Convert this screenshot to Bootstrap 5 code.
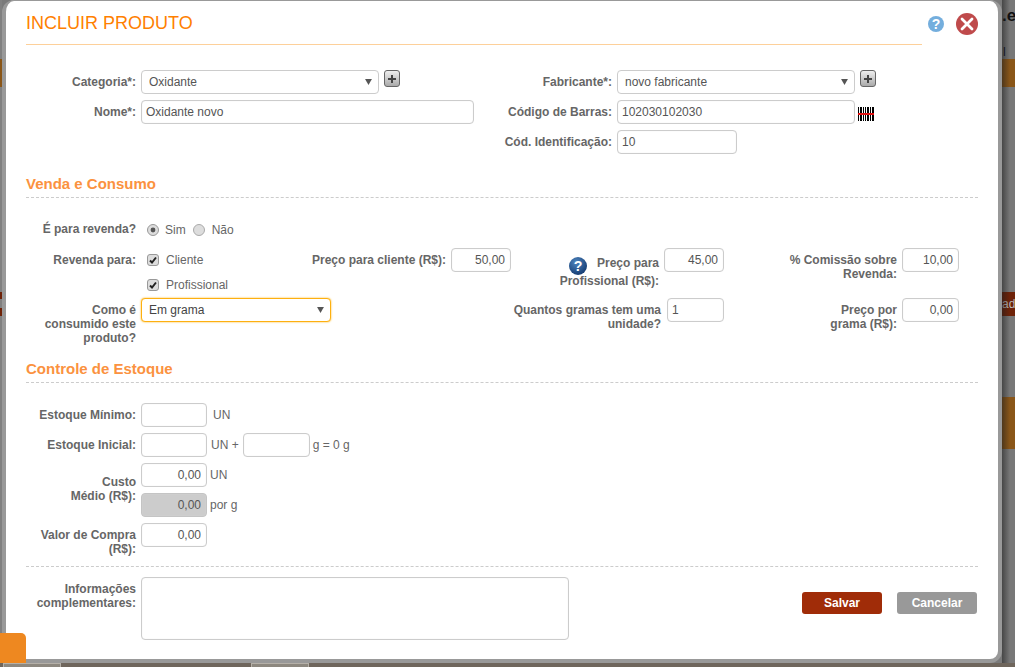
<!DOCTYPE html>
<html lang="pt-BR">
<head>
    <meta charset="UTF-8">
    <meta name="viewport" content="width=device-width, initial-scale=1.0">
    <title>Incluir Produto</title>
    <link rel="stylesheet" href="https://cdn.jsdelivr.net/npm/bootstrap@5.3.0/dist/css/bootstrap.min.css">
    <style>
        html, body { height: 667px; overflow: hidden; }
        body { background: #7a7a7a; font: 12px/14px "Liberation Sans", Arial, sans-serif; color: #666; position: relative; }

        /* page behind the dialog */
        .fundo-dir { position: absolute; left: 1002px; top: 0; width: 13px; height: 663px; background: #787878; overflow: hidden; color: #111; }
        .fundo-dir::after { content: ""; position: absolute; inset: 0; background: linear-gradient(90deg, rgba(30,30,30,.55), rgba(30,30,30,0) 8px); }
        .fundo-esq { position: absolute; left: 0; top: 0; width: 2px; height: 663px; background: #808080; }
        .faixa { position: absolute; left: 0; right: 0; }
        .faixa-marrom { background: #8a5618; }
        .faixa-vermelha { background: #6e2208; color: #bbb; font-size: 12px; line-height: 24px; }
        .texto-e { position: absolute; left: 0; top: 6px; font: bold 17px/20px "Liberation Sans", sans-serif; }
        .texto-d { position: absolute; left: 1px; top: 45px; font-size: 12px; color: #112; }
        .rodape { position: absolute; left: 0; right: 0; top: 663px; height: 4px; background: #6f665c; }
        .rodape-aba { position: absolute; top: 0; height: 4px; background: #8d887f; border: 1px solid #b5b0a8; border-bottom: 0; }

        .janela { position: absolute; left: 2px; top: 0; width: 1000px; height: 663px; background: #fff; border: 4px solid #999; border-top-width: 1px; border-radius: 12px; padding: 0 20px; }
        .aba-laranja { position: absolute; left: 0; top: 633px; width: 26px; height: 30px; background: #ee8820; border-top-right-radius: 5px; }

        .topo { height: 44px; }
        .titulo { width: 896px; height: 44px; margin: 0; font: 18px/44px "Liberation Sans", sans-serif; color: #ff8000; border-bottom: 1px solid #fdd09a; }
        .ico-ajuda { margin: 15px 0 0 6px; }
        .ico-fechar { margin: 12px 0 0 12px; }

        .secao { font: bold 15px/18px "Liberation Sans", sans-serif; color: #fb9240; padding-bottom: 4px; margin: 0; border-bottom: 1px dashed #ccc; }
        .rotulo { color: #666; font-weight: bold; text-align: right; padding-top: 5px; margin: 0; }
        .rotulo-esq { width: 110px; flex: none; margin-right: 5px; }
        .linha { display: flex; align-items: flex-start; margin-bottom: 6px; }

        .campo { height: 24px; padding: 0 4px; font-size: 12px; line-height: 22px; color: #555; border: 1px solid #ccc; border-radius: 4px; box-shadow: inset 0 0 1px #ddd; min-height: 0; }
        .campo.num { text-align: right; padding-right: 5px; }
        .campo:disabled { background: #ccc; border-color: #c4c4c4; color: #555; }
        .selecao { height: 24px; padding: 0 7px; font-size: 12px; line-height: 22px; color: #555; border: 1px solid #ccc; border-radius: 4px; background-image: url("data:image/svg+xml,%3csvg xmlns='http://www.w3.org/2000/svg' viewBox='0 0 8 7'%3e%3cpath fill='%23555' d='M0 0h8L4 7z'/%3e%3c/svg%3e"); background-size: 7px 6px; background-position: right 6px center; min-height: 0; }
        .selecao.ativo { border-color: #fdb010; box-shadow: 0 0 2px #fdb010; color: #444; }
        .l238 { width: 238px; } .l333 { width: 333px; } .l120 { width: 120px; }
        .l190 { width: 190px; } .l66 { width: 66px; } .l67 { width: 67px; } .l60 { width: 60px; } .l57 { width: 57px; } .l428 { width: 428px; }

        .btn-mais { width: 16px; height: 17px; margin-left: 5px; padding: 0; border: 1px solid #666; border-radius: 3px; background: linear-gradient(#eee, #aaa); display: flex; align-items: center; justify-content: center; }
        .barras { margin: 7px 0 0 3px; }
        .txt-un { padding-top: 5px; }

        .grade-venda { display: grid; grid-template-columns: 274px 211px 213px 235px; }
        .celula { display: flex; justify-content: flex-end; align-items: flex-start; gap: 5px; }
        .opcao { display: flex; align-items: center; height: 24px; margin: 0; }
        .opcao .form-check-input { width: 12px; height: 12px; margin: 0 7px 0 0; flex: none; background-color: #ddd; border: 1px solid #aaa; box-shadow: none; }
        .opcao .form-check-input:checked { border-color: #999; background-color: #ddd; background-size: 10px; }
        .opcao input[type=checkbox]:checked { background-image: url("data:image/svg+xml,%3csvg xmlns='http://www.w3.org/2000/svg' viewBox='0 0 10 10'%3e%3cpath fill='none' stroke='%23222' stroke-width='2' d='M2 5.5l2 2 4-5'/%3e%3c/svg%3e"); }
        .opcao input[type=radio]:checked { background-image: url("data:image/svg+xml,%3csvg xmlns='http://www.w3.org/2000/svg' viewBox='0 0 10 10'%3e%3ccircle cx='5' cy='5' r='2.4' fill='%23555'/%3e%3c/svg%3e"); }
        .linha-radio { margin: 19px 0 7px; }
        .linha-radio .opcao { padding-top: 2px; }
        .linha-radio .form-check-input { margin-right: 6px; }
        .rad-sim { margin-left: 6px; }
        .rad-nao { margin-left: 7px; }
        .rad-nao .form-check-input { margin-right: 7px; }
        .ico-duvida { vertical-align: middle; margin: 4px 10px 0 0; }
        .rotulo-duvida .linha-ico { display: block; line-height: 19px; height: 21px; }

        .btn-salvar, .btn-cancelar { width: 80px; height: 22px; padding: 0; font-size: 12px; font-weight: bold; line-height: 20px; color: #fff; border: 0; border-radius: 3px; }
        .btn-salvar { background: #a02c08; }
        .btn-cancelar { background: #999; margin-left: 15px; }
        .btn-salvar:hover { background: #a02c08; color: #fff; }
        .btn-cancelar:hover { background: #999; color: #fff; }
    </style>
</head>
<body>

<div class="fundo-esq">
    <div class="faixa faixa-marrom" style="top:59px;height:28px"></div>
    <div class="faixa faixa-vermelha" style="top:292px;height:7px"></div>
    <div class="faixa faixa-vermelha" style="top:308px;height:8px"></div>
</div>
<div class="fundo-dir">
    <span class="texto-e">.e</span>
    <span class="texto-d">l d</span>
    <div class="faixa faixa-marrom" style="top:59px;height:28px"></div>
    <div class="faixa faixa-vermelha" style="top:292px;height:24px">ad</div>
    <div class="faixa faixa-marrom" style="top:397px;height:52px"></div>
</div>
<div class="rodape">
    <div class="rodape-aba" style="left:3px;width:58px"></div>
    <div class="rodape-aba" style="left:251px;width:58px"></div>
</div>

<div class="janela">
    <div class="topo d-flex align-items-start">
        <h1 class="titulo">INCLUIR PRODUTO</h1>
        <svg class="ico-ajuda" width="16" height="16" viewBox="0 0 16 16">
            <circle cx="8" cy="8" r="8" fill="#74aedd"/>
            <text x="8" y="13" text-anchor="middle" font-family="Liberation Sans" font-weight="bold" font-size="14" fill="#fff">?</text>
        </svg>
        <svg class="ico-fechar" width="22" height="22" viewBox="0 0 22 22">
            <circle cx="11" cy="11" r="11" fill="#bf4a4b"/>
            <path d="M6 6l10 10M16 6L6 16" stroke="#fff" stroke-width="2.8" stroke-linecap="round"/>
        </svg>
    </div>

    <form>
        <div class="row g-0 topo-form">
            <div class="col-auto" style="width:476px;margin-top:25px">
                <div class="linha">
                    <label class="rotulo rotulo-esq">Categoria*:</label>
                    <select class="form-select selecao l238"><option>Oxidante</option></select>
                    <span class="btn-mais"><svg width="10" height="10" viewBox="0 0 10 10"><path d="M4 1h2v3h3v2H6v3H4V6H1V4h3z" fill="#444"/></svg></span>
                </div>
                <div class="linha">
                    <label class="rotulo rotulo-esq">Nome*:</label>
                    <input class="form-control campo l333" value="Oxidante novo">
                </div>
            </div>
            <div class="col-auto" style="width:400px;margin-top:25px">
                <div class="linha">
                    <label class="rotulo rotulo-esq">Fabricante*:</label>
                    <select class="form-select selecao l238"><option>novo fabricante</option></select>
                    <span class="btn-mais"><svg width="10" height="10" viewBox="0 0 10 10"><path d="M4 1h2v3h3v2H6v3H4V6H1V4h3z" fill="#444"/></svg></span>
                </div>
                <div class="linha">
                    <label class="rotulo rotulo-esq">Código de Barras:</label>
                    <input class="form-control campo l238" value="102030102030">
                    <svg class="barras" width="16" height="14" viewBox="0 0 16 14">
                        <path d="M0 0h1v14H0zM2 0h2v14H2zM5 0h1v14H5zM7 0h1v14H7zM9 0h2v14H9zM12 0h1v14h-1zM14 0h2v14h-2z" fill="#000"/>
                        <rect y="6" width="16" height="2" fill="#e01010"/>
                    </svg>
                </div>
                <div class="linha mb-0">
                    <label class="rotulo rotulo-esq">Cód. Identificação:</label>
                    <input class="form-control campo l120" value="10">
                </div>
            </div>
        </div>

        <h2 class="secao" style="margin-top:21px">Venda e Consumo</h2>

        <div class="linha linha-radio">
            <label class="rotulo rotulo-esq">É para revenda?</label>
            <label class="opcao rad-sim"><input class="form-check-input" type="radio" name="revenda" checked>Sim</label>
            <label class="opcao rad-nao"><input class="form-check-input" type="radio" name="revenda">Não</label>
        </div>

        <div class="grade-venda">
            <div class="d-flex align-items-start" style="height:50px">
                <label class="rotulo rotulo-esq">Revenda para:</label>
                <div style="margin-left:6px">
                    <label class="opcao"><input class="form-check-input" type="checkbox" checked>Cliente</label>
                    <label class="opcao" style="margin-top:1px"><input class="form-check-input" type="checkbox" checked>Profissional</label>
                </div>
            </div>
            <div class="celula">
                <label class="rotulo">Preço para cliente (R$):</label>
                <input class="form-control campo num l60" value="50,00">
            </div>
            <div class="celula">
                <label class="rotulo rotulo-duvida">
                    <span class="linha-ico"><svg class="ico-duvida" width="18" height="18" viewBox="0 0 19 19">
                        <defs><radialGradient id="azul" cx="40%" cy="30%" r="75%"><stop offset="0" stop-color="#4f86c0"/><stop offset="1" stop-color="#12386e"/></radialGradient></defs>
                        <circle cx="9.5" cy="9.5" r="9.5" fill="url(#azul)"/>
                        <text x="9.5" y="15" text-anchor="middle" font-family="Liberation Sans" font-weight="bold" font-size="15" fill="#fff">?</text>
                    </svg>Preço para</span>Profissional (R$):
                </label>
                <input class="form-control campo num l60" value="45,00">
            </div>
            <div class="celula">
                <label class="rotulo">% Comissão sobre<br>Revenda:</label>
                <input class="form-control campo num l57" value="10,00">
            </div>

            <div class="d-flex align-items-start" style="grid-column:span 2;height:50px">
                <label class="rotulo rotulo-esq">Como é<br>consumido este<br>produto?</label>
                <select class="form-select selecao ativo l190"><option>Em grama</option></select>
            </div>
            <div class="celula" style="gap:6px">
                <label class="rotulo">Quantos gramas tem uma<br>unidade?</label>
                <input class="form-control campo l57" value="1">
            </div>
            <div class="celula">
                <label class="rotulo">Preço por<br>grama (R$):</label>
                <input class="form-control campo num l57" value="0,00">
            </div>
        </div>

        <h2 class="secao" style="margin-top:12px">Controle de Estoque</h2>

        <div class="linha" style="margin-top:20px">
            <label class="rotulo rotulo-esq">Estoque Mínimo:</label>
            <input class="form-control campo l66">
            <span class="txt-un" style="margin-left:6px">UN</span>
        </div>
        <div class="linha">
            <label class="rotulo rotulo-esq">Estoque Inicial:</label>
            <input class="form-control campo l66">
            <span class="txt-un" style="margin-left:4px">UN +</span>
            <input class="form-control campo l67" style="margin-left:4px">
            <span class="txt-un" style="margin-left:3px">g = 0 g</span>
        </div>
        <div class="linha">
            <label class="rotulo rotulo-esq" style="padding-top:12px">Custo<br>Médio (R$):</label>
            <div>
                <div class="linha">
                    <input class="form-control campo num l66" value="0,00">
                    <span class="txt-un" style="margin-left:3px">UN</span>
                </div>
                <div class="linha mb-0">
                    <input class="form-control campo num l66" value="0,00" disabled>
                    <span class="txt-un" style="margin-left:3px">por g</span>
                </div>
            </div>
        </div>
        <div class="linha mb-0" style="height:43px">
            <label class="rotulo rotulo-esq">Valor de Compra<br>(R$):</label>
            <input class="form-control campo num l66" value="0,00">
        </div>

        <div style="border-top:1px dashed #ccc;margin-bottom:10px"></div>

        <div class="d-flex align-items-start">
            <label class="rotulo rotulo-esq">Informações<br>complementares:</label>
            <textarea class="form-control campo l428" style="height:63px;resize:none"></textarea>
            <div class="ms-auto" style="margin-top:15px;margin-right:1px">
                <button type="button" class="btn btn-salvar">Salvar</button><button type="button" class="btn btn-cancelar">Cancelar</button>
            </div>
        </div>
    </form>
</div>
<div class="aba-laranja"></div>

</body>
</html>
